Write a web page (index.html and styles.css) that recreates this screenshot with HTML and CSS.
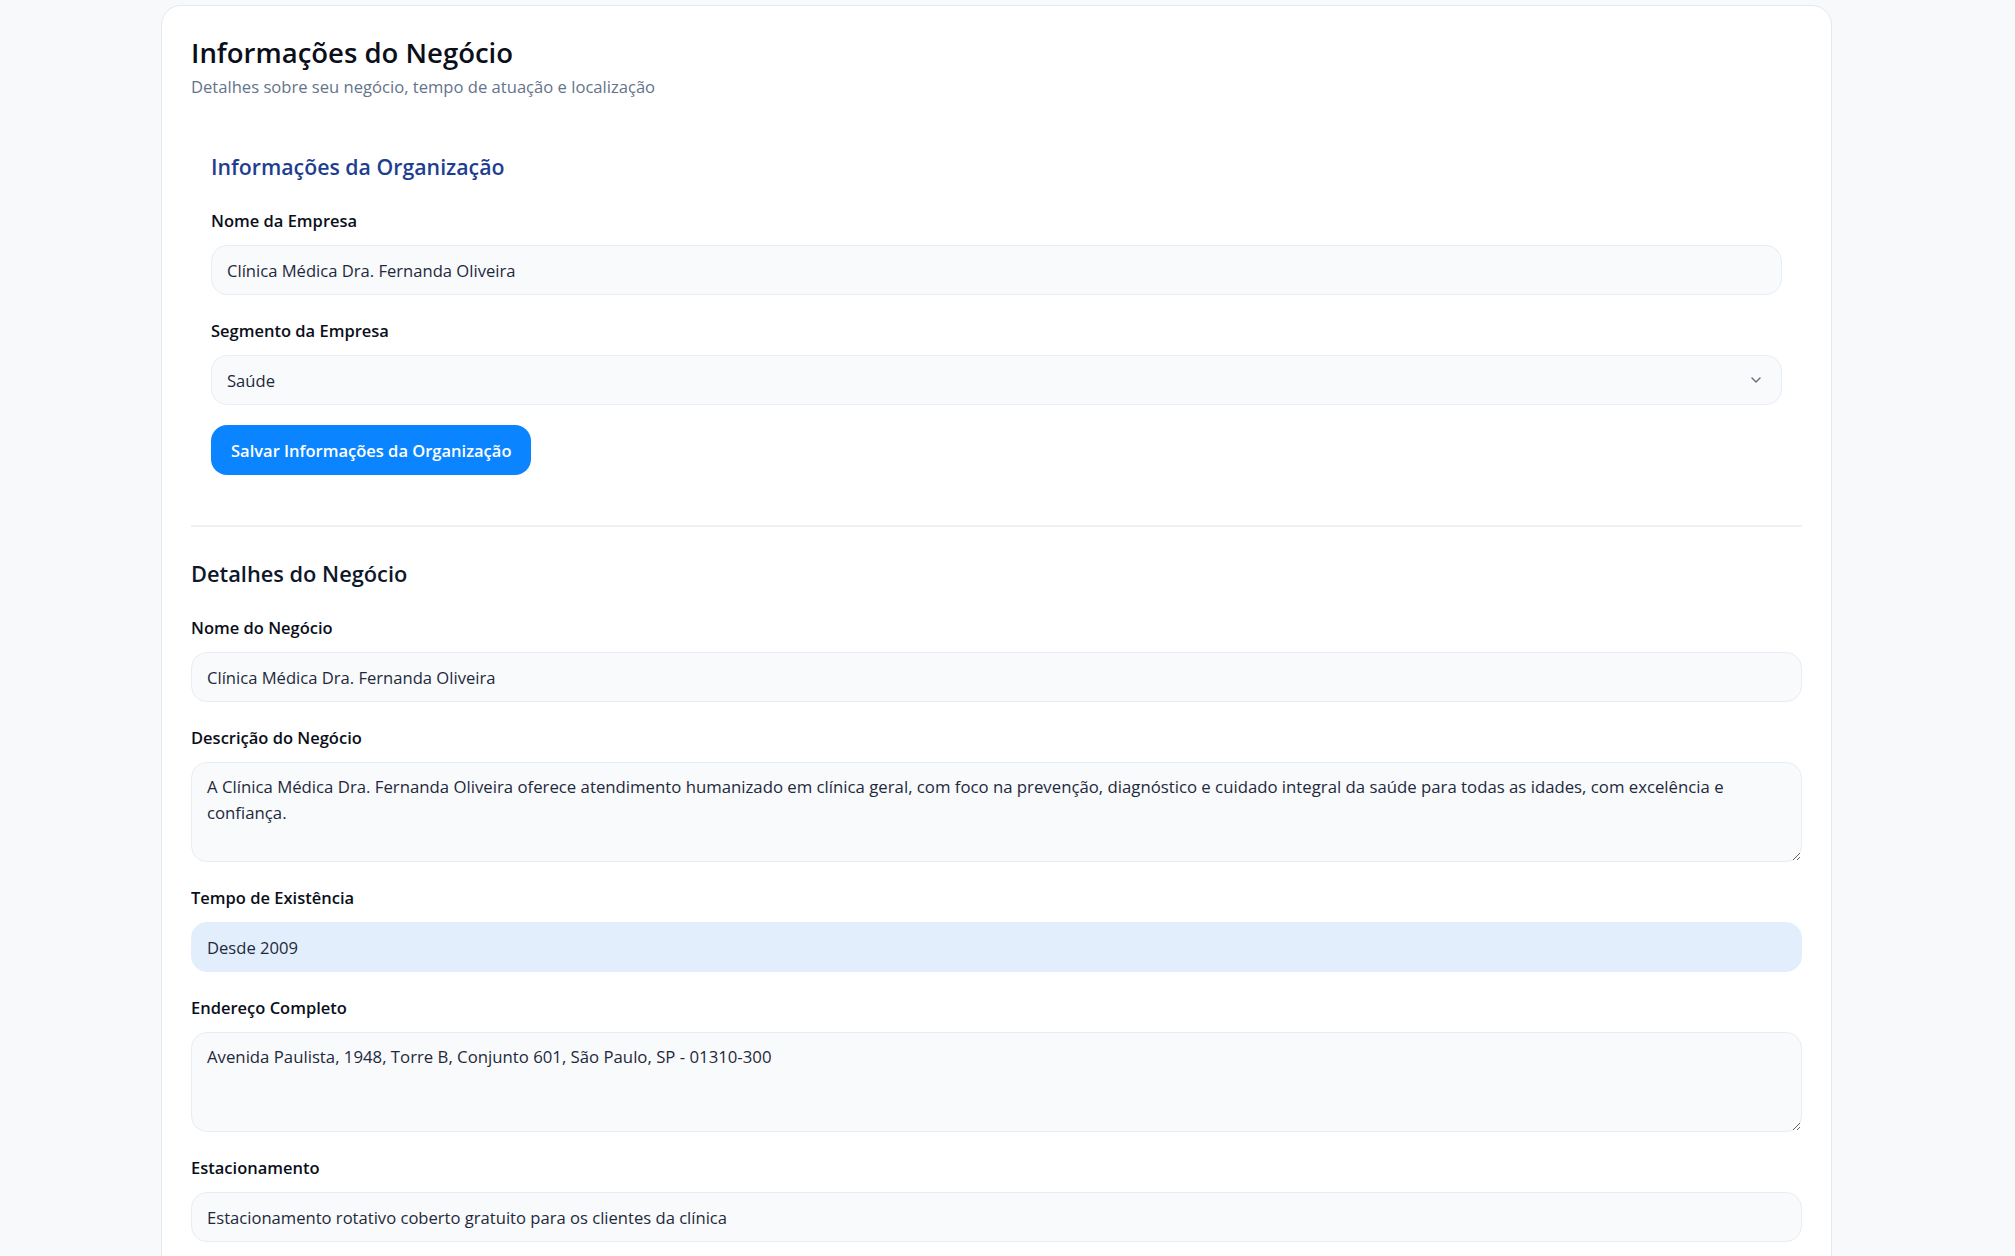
FILE: index.html
```html
<!DOCTYPE html>
<html lang="pt-BR">
<head>
    <meta charset="UTF-8">
    <meta name="viewport" content="width=device-width, initial-scale=1.0">
    <title>Informações do Negócio</title>
    <link rel="stylesheet" href="styles.css">
</head>
<body>
    <div class="card">
        <!-- Cabeçalho -->
        <div class="card-header">
            <h1 class="card-title">Informações do Negócio</h1>
            <p class="card-subtitle">Detalhes sobre seu negócio, tempo de atuação e localização</p>
        </div>

        <!-- Organização -->
        <div class="org-section">
            <h2 class="org-title">Informações da Organização</h2>

            <div class="field">
                <label class="field-label" for="empresa">Nome da Empresa</label>
                <input class="field-input" id="empresa" type="text" value="Clínica Médica Dra. Fernanda Oliveira">
            </div>

            <div class="field field-last">
                <label class="field-label" for="segmento">Segmento da Empresa</label>
                <div class="select-wrap">
                    <select class="field-input field-select" id="segmento">
                        <option>Saúde</option>
                        <option>Educação</option>
                        <option>Varejo</option>
                    </select>
                    <svg class="select-arrow" viewBox="0 0 16 16" width="16" height="16">
                        <path d="M4 6l4 4 4-4" fill="none" stroke="currentColor" stroke-width="1.5" stroke-linecap="round" stroke-linejoin="round"/>
                    </svg>
                </div>
            </div>

            <button class="btn-primary" type="button">Salvar Informações da Organização</button>
        </div>

        <div class="divider"></div>

        <!-- Detalhes do negócio -->
        <div class="details-section">
            <h2 class="details-title">Detalhes do Negócio</h2>

            <div class="field">
                <label class="field-label" for="negocio">Nome do Negócio</label>
                <input class="field-input" id="negocio" type="text" value="Clínica Médica Dra. Fernanda Oliveira">
            </div>

            <div class="field">
                <label class="field-label" for="descricao">Descrição do Negócio</label>
                <textarea class="field-input field-textarea" id="descricao">A Clínica Médica Dra. Fernanda Oliveira oferece atendimento humanizado em clínica geral, com foco na prevenção, diagnóstico e cuidado integral da saúde para todas as idades, com excelência e confiança.</textarea>
            </div>

            <div class="field">
                <label class="field-label" for="tempo">Tempo de Existência</label>
                <input class="field-input field-filled" id="tempo" type="text" value="Desde 2009">
            </div>

            <div class="field">
                <label class="field-label" for="endereco">Endereço Completo</label>
                <textarea class="field-input field-textarea" id="endereco">Avenida Paulista, 1948, Torre B, Conjunto 601, São Paulo, SP - 01310-300</textarea>
            </div>

            <div class="field">
                <label class="field-label" for="estacionamento">Estacionamento</label>
                <input class="field-input" id="estacionamento" type="text" value="Estacionamento rotativo coberto gratuito para os clientes da clínica">
            </div>
        </div>
    </div>
</body>
</html>
```

FILE: styles.css
```css
* {
    margin: 0;
    padding: 0;
    box-sizing: border-box;
}

html,
body {
    overflow: hidden;
}

body {
    font-family: 'Open Sans', 'Noto Sans', sans-serif;
    background: #f7f9fb;
    color: #0f172a;
    height: 1256px;
}

/* 卡片 */
.card {
    width: 1671px;
    margin: 5px 0 0 161px;
    padding: 29px 29px 40px;
    background: #ffffff;
    border: 1px solid #e3e9f0;
    border-radius: 20px;
}

.card-header {
    margin-bottom: 32px;
}

.card-title {
    font-size: 27.5px;
    font-weight: 600;
    line-height: 36px;
    color: #0b0f1a;
}

.card-subtitle {
    margin-top: 4px;
    font-size: 16.6px;
    line-height: 24px;
    color: #64748b;
}

/* 组织信息 */
.org-section {
    padding: 21px 20px;
}

.org-title {
    font-size: 21.3px;
    font-weight: 600;
    line-height: 30px;
    color: #1e3f8f;
    margin-bottom: 27px;
}

.details-title {
    font-size: 21.8px;
    font-weight: 600;
    line-height: 30px;
    color: #0f172a;
    margin-bottom: 27px;
}

.details-section {
    padding-top: 32px;
}

.divider {
    height: 2px;
    background: #eef2f6;
    margin-top: 29px;
}

/* 表单 */
.field {
    margin-bottom: 24px;
}

.field-last {
    margin-bottom: 20px;
}

.field-label {
    display: block;
    font-size: 16.5px;
    font-weight: 600;
    line-height: 24px;
    margin-bottom: 12px;
    color: #0b0f1a;
}

.field-input {
    display: block;
    width: 100%;
    height: 50px;
    padding: 0 15px;
    font-family: inherit;
    font-size: 16.6px;
    color: #1e293b;
    background: #f8fafc;
    border: 1.5px solid #e8edf3;
    border-radius: 16px;
    outline: none;
}

.field-filled {
    background: #e3eefc;
    border-color: #e3eefc;
}

.field-textarea {
    height: 100px;
    padding: 11px 15px;
    font-size: 16.75px;
    line-height: 25.5px;
    resize: vertical;
}

.select-wrap {
    position: relative;
}

.field-select {
    appearance: none;
    -webkit-appearance: none;
}

.select-arrow {
    position: absolute;
    right: 18px;
    top: 17px;
    color: #6b7280;
    pointer-events: none;
}

/* 按钮 */
.btn-primary {
    height: 50px;
    padding: 0 20px;
    font-family: inherit;
    font-size: 16.5px;
    font-weight: 600;
    color: #ffffff;
    background: #0a84ff;
    border: none;
    border-radius: 16px;
    cursor: pointer;
}
```
